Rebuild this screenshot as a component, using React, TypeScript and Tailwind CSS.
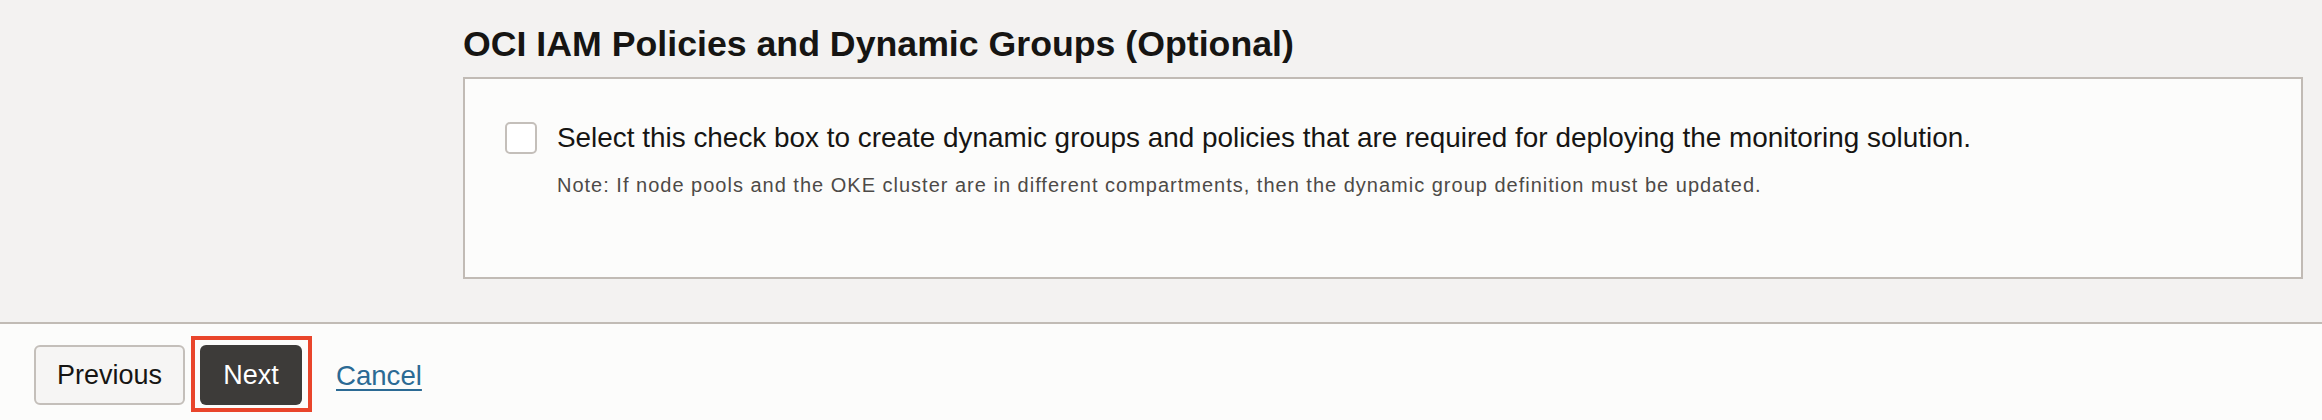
import React from "react";

export default function App() {
  return (
    <div className="w-[2322px] h-[420px] overflow-hidden bg-[#fcfcfb] font-['Liberation_Sans',Arial,sans-serif]">
      <div className="h-[322px] bg-[#f3f2f1] pl-[463px] pr-[19px] pt-[24px]">
        <h2 className="text-[35.7px] leading-[40px] font-bold text-[#161513]">
          OCI IAM Policies and Dynamic Groups (Optional)
        </h2>
        <div className="mt-[13px] h-[202px] border-2 border-[#c1bbb5] bg-[#fcfcfb] pl-[40px] pt-[43px] flex gap-[20px]">
          <div className="w-[32px] h-[32px] shrink-0 rounded-[5px] border-2 border-[#c4bfba] bg-white" />
          <div>
            <p className="text-[27.9px] leading-[32px] text-[#161513]">
              Select this check box to create dynamic groups and policies that are required for deploying the monitoring solution.
            </p>
            <p className="mt-[19px] text-[20px] leading-[24px] tracking-[1px] text-[#4d4a47]">
              Note: If node pools and the OKE cluster are in different compartments, then the dynamic group definition must be updated.
            </p>
          </div>
        </div>
      </div>
      <div className="border-t-2 border-[#c1bbb5] bg-[#fcfcfb] pl-[34px] pt-[21px] flex items-center">
        <button className="w-[151px] h-[60px] rounded-[6px] border-2 border-[#c4bfba] bg-[#f6f5f4] text-[27px] text-[#161513]">
          Previous
        </button>
        <div className="relative ml-[15px]">
          <button className="w-[102px] h-[60px] rounded-[6px] bg-[#3d3b39] text-[27px] text-white">
            Next
          </button>
          <div className="absolute -left-[9px] -top-[9px] -right-[10px] -bottom-[7px] border-4 border-[#e9452b]" />
        </div>
        <a href="#" className="ml-[34px] mt-[2px] text-[27.6px] text-[#2b6a94] underline underline-offset-[4px]">
          Cancel
        </a>
      </div>
    </div>
  );
}
